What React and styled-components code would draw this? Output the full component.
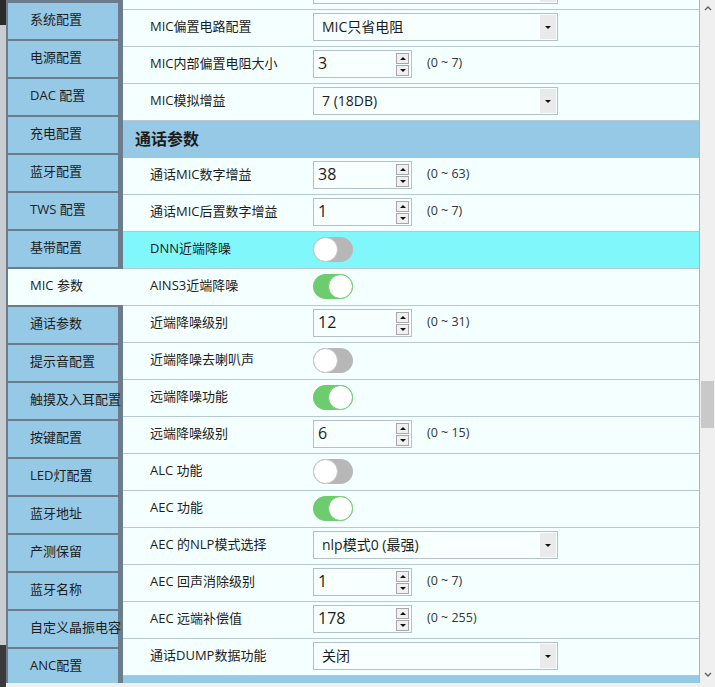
import React, { useLayoutEffect, useRef } from 'react'
import styled, { createGlobalStyle } from 'styled-components'

const GlobalStyle = createGlobalStyle`
    html, body {
        margin: 0;
        padding: 0;
        overflow: hidden;
        background: #f0f0f0;
    }
    body {
        font-family: "Open Sans", "Noto Sans CJK SC", sans-serif;
        color: #1c1c1c;
    }
`

const Frame = styled.div`
    width: 715px;
    height: 687px;
    display: flex;
    flex-direction: column;
`

const Main = styled.div`
    height: 683px;
    display: flex;
`

const BackStrip = styled.div`
    width: 6px;
    flex-shrink: 0;
    background: linear-gradient(#2b2b2b 0 25px, #c9ccd0 25px 645px, #3a3a3a 645px);
`

const Sidebar = styled.div`
    width: 117px;
    flex-shrink: 0;
    background: #6d7c8c;
    padding: 3px 0 0 2px;
    box-sizing: border-box;
    display: flex;
    flex-direction: column;
    gap: 2px;
    overflow: hidden;
`

const Tab = styled.div`
    flex-shrink: 0;
    width: ${p => (p.$active ? '115px' : '110px')};
    height: 36px;
    box-sizing: border-box;
    padding: 0 0 5px 22px;
    display: flex;
    align-items: center;
    font-size: 13px;
    white-space: nowrap;
    background: ${p => (p.$active ? '#f4ffff' : '#96c9e6')};
`

const Pane = styled.div`
    flex: 1;
    overflow: hidden;
    background: #f4ffff;
    border-right: 1px solid #a9b6c1;
`

const Row = styled.div`
    height: 37px;
    box-sizing: border-box;
    padding-bottom: 2px;
    border-bottom: 1px solid #b8c8d3;
    display: flex;
    align-items: center;
    background: ${p => (p.$hl ? '#80f8fb' : '#f4ffff')};
`

const Label = styled.div`
    width: 190px;
    flex-shrink: 0;
    box-sizing: border-box;
    padding: 0 0 3px 27px;
    font-size: 13px;
    white-space: nowrap;
`

const Header = styled.div`
    height: 37px;
    box-sizing: border-box;
    display: flex;
    align-items: center;
    padding: 0 0 4px 12px;
    background: #96c9e6;
    font-size: 16px;
    font-weight: bold;
`

const Select = styled.div`
    width: 245px;
    height: 28px;
    box-sizing: border-box;
    border: 1px solid #b3c0cc;
    background: #f7ffff;
    display: flex;
    align-items: center;
    font-size: 14px;
`

const SelectText = styled.span`
    flex: 1;
    padding: 0 0 2px 8px;
`

const SelectButton = styled.div`
    width: 16px;
    align-self: stretch;
    margin: 1px 1px 1px 0;
    background: #e9eaea;
    display: flex;
    align-items: center;
    justify-content: center;
`

const Caret = styled.div`
    width: 0;
    height: 0;
    border-left: 3px solid transparent;
    border-right: 3px solid transparent;
    border-${p => (p.$up ? 'bottom' : 'top')}: 3px solid #111;
`

const NumberBox = styled.div`
    width: 99px;
    height: 28px;
    box-sizing: border-box;
    border: 1px solid #b3c0cc;
    background: #f7ffff;
    display: flex;
    align-items: center;
    font-size: 16px;
`

const NumberText = styled.span`
    flex: 1;
    padding: 0 0 2px 4px;
`

const Spinner = styled.div`
    width: 13px;
    margin-right: 2px;
    display: flex;
    flex-direction: column;
    gap: 1px;
`

const SpinButton = styled.div`
    height: 9px;
    border: 1px solid #a7a7a7;
    background: #f0f0f0;
    display: flex;
    align-items: center;
    justify-content: center;
`

const Range = styled.span`
    margin-left: 15px;
    padding-bottom: 3px;
    font-size: 12.5px;
    color: #333;
`

const Toggle = styled.div`
    width: 40px;
    height: 25px;
    box-sizing: border-box;
    border-radius: 13px;
    background: ${p => (p.$on ? '#6dcd6e' : '#b7b7b7')};
    display: flex;
    justify-content: ${p => (p.$on ? 'flex-end' : 'flex-start')};
`

const Knob = styled.div`
    width: 25px;
    height: 25px;
    box-sizing: border-box;
    border-radius: 50%;
    background: #fff;
    border: 1px solid ${p => (p.$on ? '#6dcd6e' : '#c4c4c4')};
`

const Scrollbar = styled.div`
    width: 15px;
    flex-shrink: 0;
    background: #f0f0f0;
    display: flex;
    flex-direction: column;
    align-items: center;
`

const Arrow = styled.div`
    height: 17px;
    display: flex;
    align-items: center;
    justify-content: center;
`

const Track = styled.div`
    flex: 1;
    width: 100%;
`

const Thumb = styled.div`
    margin: ${p => p.$offset}px 1px 0 1px;
    height: 47px;
    background: #c9c9c9;
`

const Bottom = styled.div`
    height: 4px;
    display: flex;
`

const BottomEdge = styled.div`
    width: 6px;
    background: #3a3a3a;
`

const tabs = ['系统配置', '电源配置', 'DAC 配置', '充电配置', '蓝牙配置', 'TWS 配置', '基带配置', 'MIC 参数', '通话参数',
    '提示音配置', '触摸及入耳配置', '按键配置', 'LED灯配置', '蓝牙地址', '产测保留', '蓝牙名称', '自定义晶振电容', 'ANC配置']

const rows = [
    { label: '', select: '' },
    { label: 'MIC偏置电路配置', select: 'MIC只省电阻' },
    { label: 'MIC内部偏置电阻大小', num: 3, range: '(0 ~ 7)' },
    { label: 'MIC模拟增益', select: '7 (18DB)' },
    { header: '通话参数' },
    { label: '通话MIC数字增益', num: 38, range: '(0 ~ 63)' },
    { label: '通话MIC后置数字增益', num: 1, range: '(0 ~ 7)' },
    { label: 'DNN近端降噪', toggle: false, hl: true },
    { label: 'AINS3近端降噪', toggle: true },
    { label: '近端降噪级别', num: 12, range: '(0 ~ 31)' },
    { label: '近端降噪去喇叭声', toggle: false },
    { label: '远端降噪功能', toggle: true },
    { label: '远端降噪级别', num: 6, range: '(0 ~ 15)' },
    { label: 'ALC 功能', toggle: false },
    { label: 'AEC 功能', toggle: true },
    { label: 'AEC 的NLP模式选择', select: 'nlp模式0 (最强)' },
    { label: 'AEC 回声消除级别', num: 1, range: '(0 ~ 7)' },
    { label: 'AEC 远端补偿值', num: 178, range: '(0 ~ 255)' },
    { label: '通话DUMP数据功能', select: '关闭' },
    { header: '' },
]

const Chevron = ({ down }) => (
    <svg width="8" height="5" viewBox="0 0 8 5">
        <path d={down ? 'M1 1 L4 4 L7 1' : 'M1 4 L4 1 L7 4'} fill="none" stroke="#606060" strokeWidth="1.4" />
    </svg>
)

const Control = ({ row }) => {
    if (row.select !== undefined) {
        return (
            <Select>
                <SelectText>{row.select}</SelectText>
                <SelectButton><Caret /></SelectButton>
            </Select>
        )
    }
    if (row.num !== undefined) {
        return (
            <>
                <NumberBox>
                    <NumberText>{row.num}</NumberText>
                    <Spinner>
                        <SpinButton><Caret $up /></SpinButton>
                        <SpinButton><Caret /></SpinButton>
                    </Spinner>
                </NumberBox>
                <Range>{row.range}</Range>
            </>
        )
    }
    return (
        <Toggle $on={row.toggle}>
            <Knob $on={row.toggle} />
        </Toggle>
    )
}

const App = () => {
    const pane = useRef(null)

    useLayoutEffect(() => {
        if (pane.current) pane.current.scrollTop = 27
    }, [])

    return (
        <Frame>
            <GlobalStyle />
            <Main>
                <BackStrip />
                <Sidebar>
                    {tabs.map(t => (
                        <Tab key={t} $active={t === 'MIC 参数'}>{t}</Tab>
                    ))}
                </Sidebar>
                <Pane ref={pane}>
                    {rows.map((r, i) =>
                        r.header !== undefined ? (
                            <Header key={i}>{r.header}</Header>
                        ) : (
                            <Row key={i} $hl={r.hl}>
                                <Label>{r.label}</Label>
                                <Control row={r} />
                            </Row>
                        )
                    )}
                </Pane>
                <Scrollbar>
                    <Arrow><Chevron /></Arrow>
                    <Track><Thumb $offset={364} /></Track>
                    <Arrow><Chevron down /></Arrow>
                </Scrollbar>
            </Main>
            <Bottom>
                <BottomEdge />
            </Bottom>
        </Frame>
    )
}

export default App
